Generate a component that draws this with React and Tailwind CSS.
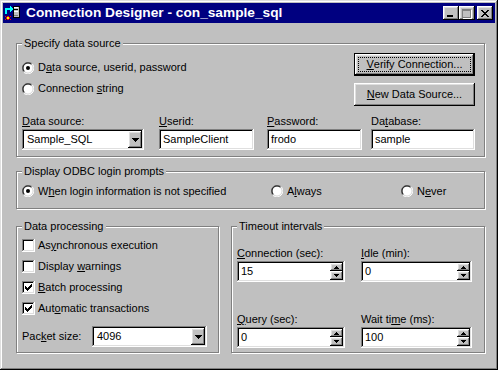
import React from 'react';

const raised = 'shadow-[inset_-1px_-1px_#000,inset_1px_1px_#fff,inset_-2px_-2px_#808080,inset_2px_2px_#dfdfdf]';
const sunken = 'shadow-[inset_-1px_-1px_#fff,inset_1px_1px_#808080,inset_-2px_-2px_#dfdfdf,inset_2px_2px_#000]';

// underlined access key
const K = ({ children }) => <span className="underline underline-offset-[1px]">{children}</span>;

const Group = ({ label, className, children }) => (
  <div className={`relative border border-[#808080] shadow-[1px_1px_0_#fff,inset_1px_1px_0_#fff] ${className}`}>
    <span className="absolute left-[5px] -top-[8px] bg-[#c0c0c0] px-[2px] leading-[14px]">{label}</span>
    {children}
  </div>
);

const Radio = ({ checked }) => (
  <svg width="12" height="12" viewBox="0 0 12 12" className="shrink-0">
    <circle cx="6" cy="6" r="5" fill="#fff" />
    <path d="M1.76 10.24A6 6 0 0 1 10.24 1.76" stroke="#808080" fill="none" />
    <path d="M10.24 1.76A6 6 0 0 1 1.76 10.24" stroke="#fff" fill="none" />
    <path d="M2.46 9.54A5 5 0 0 1 9.54 2.46" stroke="#000" fill="none" />
    <path d="M9.54 2.46A5 5 0 0 1 2.46 9.54" stroke="#dfdfdf" fill="none" />
    {checked && <circle cx="6" cy="6" r="2" fill="#000" />}
  </svg>
);

const Check = ({ checked }) => (
  <div className={`w-[13px] h-[13px] shrink-0 bg-white ${sunken} flex items-center justify-center`}>
    {checked && (
      <svg width="7" height="7" viewBox="0 0 7 7" shapeRendering="crispEdges">
        <path d="M0 2h1v3h-1zM1 3h1v3h-1zM2 4h1v3h-1zM3 3h1v3h-1zM4 2h1v3h-1zM5 1h1v3h-1zM6 0h1v3h-1z" fill="#000" />
      </svg>
    )}
  </div>
);

const Arrow = ({ up }) => (
  <svg width="7" height="4" viewBox="0 0 7 4" shapeRendering="crispEdges" className={up ? 'rotate-180' : ''}>
    <path d="M0 0h7v1h-7zM1 1h5v1h-5zM2 2h3v1h-3zM3 3h1v1h-1z" fill="#000" />
  </svg>
);

const Combo = ({ value, className }) => (
  <div className={`flex h-[21px] bg-white p-[2px] ${sunken} ${className}`}>
    <span className="flex-1 pl-[3px] leading-[17px]">{value}</span>
    <div className={`w-[14px] bg-[#c0c0c0] ${raised} flex items-center justify-center`}>
      <Arrow />
    </div>
  </div>
);

const Field = ({ value, className }) => (
  <div className={`h-[21px] bg-white p-[2px] ${sunken} ${className}`}>
    <span className="block pl-[2px] leading-[17px]">{value}</span>
  </div>
);

const SmallArrow = ({ up }) => (
  <svg width="5" height="3" viewBox="0 0 5 3" shapeRendering="crispEdges" className={up ? 'rotate-180' : ''}>
    <path d="M0 0h5v1h-5zM1 1h3v1h-3zM2 2h1v1h-1z" fill="#000" />
  </svg>
);

const Spin = ({ value, className }) => (
  <div className={`flex h-[21px] bg-white p-[2px] ${sunken} ${className}`}>
    <span className="flex-1 pl-[2px] leading-[17px]">{value}</span>
    <div className="flex flex-col w-[13px]">
      <div className={`h-[8px] bg-[#c0c0c0] ${raised} flex items-center justify-center`}>
        <SmallArrow up />
      </div>
      <div className={`h-[9px] bg-[#c0c0c0] ${raised} flex items-center justify-center`}>
        <SmallArrow />
      </div>
    </div>
  </div>
);

const Button = ({ children, isDefault }) => (
  <div className={`w-[121px] h-[23px] ${isDefault ? 'border border-black' : ''}`}>
    <div className={`w-full h-full bg-[#c0c0c0] ${raised} flex items-center justify-center ${isDefault ? 'p-[3px]' : ''}`}>
      {isDefault ? (
        <div className="w-full h-full border border-dotted border-black flex items-center justify-center leading-[13px]">
          {children}
        </div>
      ) : (
        <span className="leading-[13px]">{children}</span>
      )}
    </div>
  </div>
);

const TitleIcon = () => (
  <svg width="16" height="16" viewBox="0 0 16 16" shapeRendering="crispEdges">
    {/* server box */}
    <rect x="9" y="1" width="6" height="11" fill="#c0c0c0" stroke="#000" strokeWidth="1" />
    <rect x="10" y="2" width="4" height="1" fill="#fff" />
    <rect x="10" y="4" width="4" height="1" fill="#000" />
    <rect x="10" y="6" width="4" height="1" fill="#fff" />
    <rect x="10" y="10" width="4" height="1" fill="#808080" />
    {/* cyan arrow */}
    <path d="M2 9V4h5" stroke="#00ffff" strokeWidth="2" fill="none" />
    <path d="M6 1l3 3-3 3z" fill="#00ffff" />
    {/* spark */}
    <path d="M1 11l2 1 1-2 1 2 2-1-1 2 1 2-2-1-1 2-1-2-2 1 1-2z" fill="#ff0000" />
    <rect x="3" y="12" width="2" height="2" fill="#ffff00" />
  </svg>
);

const TitleButton = ({ children }) => (
  <div className={`w-[16px] h-[14px] bg-[#c0c0c0] ${raised} flex items-center justify-center`}>
    {children}
  </div>
);

export default function App() {
  return (
    <div className="w-[498px] h-[370px] bg-[#c0c0c0] p-[3px] text-[11px] text-black font-['Liberation_Sans',Arial,sans-serif] shadow-[inset_-1px_-1px_#000,inset_1px_1px_#dfdfdf,inset_-2px_-2px_#808080,inset_2px_2px_#fff] overflow-hidden">
      {/* Title bar */}
      <div className="h-[20px] bg-[#000080] flex items-center pl-[1px] pr-[2px]">
        <TitleIcon />
        <span className="ml-[6px] text-white font-bold text-[13.7px] leading-none">Connection Designer - con_sample_sql</span>
        <div className="ml-auto flex items-center">
          <TitleButton>
            <div className="w-[6px] h-[2px] bg-black mt-[6px] -ml-[2px]" />
          </TitleButton>
          <TitleButton>
            <div className="w-[9px] h-[9px] border border-[#808080] border-t-2 shadow-[1px_1px_0_#fff] -ml-[1px]" />
          </TitleButton>
          <div className="ml-[2px]">
            <TitleButton>
              <svg width="8" height="7" viewBox="0 0 8 7" shapeRendering="crispEdges" className="-ml-[1px]">
                <path d="M0 0h2v1h-2zM6 0h2v1h-2zM1 1h2v1h-2zM5 1h2v1h-2zM2 2h4v1h-4zM3 3h2v1h-2zM2 4h4v1h-4zM1 5h2v1h-2zM5 5h2v1h-2zM0 6h2v1h-2zM6 6h2v1h-2z" fill="#000" />
              </svg>
            </TitleButton>
          </div>
        </div>
      </div>

      <div className="pl-[13px] pt-[20px]">
        {/* Specify data source */}
        <Group label="Specify data source" className="w-[469px] h-[114px] pt-[9px] pl-[5px] pr-[9px]">
          <div className="flex items-start h-[53px]">
            <div className="flex flex-col mt-[4px]">
              <div className="flex items-center gap-[4px] h-[21px]">
                <Radio checked />
                <span>D<K>a</K>ta source, userid, password</span>
              </div>
              <div className="flex items-center gap-[4px] h-[21px]">
                <Radio />
                <span>Connection <K>s</K>tring</span>
              </div>
            </div>
            <div className="ml-auto flex flex-col gap-[7px]">
              <Button isDefault><K>V</K>erify Connection...</Button>
              <Button><K>N</K>ew Data Source...</Button>
            </div>
          </div>
          <div className="flex mt-[8px]">
            <div className="flex flex-col w-[122px]">
              <span className="leading-[14px]"><K>D</K>ata source:</span>
              <Combo value="Sample_SQL" className="mt-[1px]" />
            </div>
            <div className="flex flex-col w-[95px] ml-[15px]">
              <span className="leading-[14px]"><K>U</K>serid:</span>
              <Field value="SampleClient" className="mt-[1px]" />
            </div>
            <div className="flex flex-col w-[95px] ml-[13px]">
              <span className="leading-[14px]"><K>P</K>assword:</span>
              <Field value="frodo" className="mt-[1px]" />
            </div>
            <div className="flex flex-col w-[104px] ml-[9px]">
              <span className="leading-[14px]">Da<K>t</K>abase:</span>
              <Field value="sample" className="mt-[1px]" />
            </div>
          </div>
        </Group>

        {/* Display ODBC login prompts */}
        <Group label="Display ODBC login prompts" className="w-[469px] h-[38px] mt-[14px] pt-[12px] pl-[5px]">
          <div className="flex items-center h-[14px]">
            <div className="flex items-center gap-[4px] w-[249px]">
              <Radio checked />
              <span>W<K>h</K>en login information is not specified</span>
            </div>
            <div className="flex items-center gap-[4px] w-[130px]">
              <Radio />
              <span>A<K>l</K>ways</span>
            </div>
            <div className="flex items-center gap-[4px]">
              <Radio />
              <span>N<K>e</K>ver</span>
            </div>
          </div>
        </Group>

        <div className="flex gap-[12px] mt-[17px]">
          {/* Data processing */}
          <Group label="Data processing" className="w-[203px] h-[127px] pt-[8px] pl-[5px]">
            <div className="flex items-center gap-[3px] h-[21px]">
              <Check />
              <span>As<K>y</K>nchronous execution</span>
            </div>
            <div className="flex items-center gap-[3px] h-[21px]">
              <Check />
              <span>Display <K>w</K>arnings</span>
            </div>
            <div className="flex items-center gap-[3px] h-[21px]">
              <Check checked />
              <span><K>B</K>atch processing</span>
            </div>
            <div className="flex items-center gap-[3px] h-[21px]">
              <Check checked />
              <span>Aut<K>o</K>matic transactions</span>
            </div>
            <div className="flex items-center mt-[7px]">
              <span className="w-[70px]">Pac<K>k</K>et size:</span>
              <Combo value="4096" className="w-[115px]" />
            </div>
          </Group>

          {/* Timeout intervals */}
          <Group label="Timeout intervals" className="w-[254px] h-[127px] pt-[19px] pl-[5px]">
            <div className="flex">
              <div className="flex flex-col w-[108px]">
                <span className="leading-[14px]"><K>C</K>onnection (sec):</span>
                <Spin value="15" className="mt-[1px]" />
              </div>
              <div className="flex flex-col w-[111px] ml-[16px]">
                <span className="leading-[14px]"><K>I</K>dle (min):</span>
                <Spin value="0" className="mt-[1px]" />
              </div>
            </div>
            <div className="flex mt-[30px]">
              <div className="flex flex-col w-[108px]">
                <span className="leading-[14px]"><K>Q</K>uery (sec):</span>
                <Spin value="0" className="mt-[1px]" />
              </div>
              <div className="flex flex-col w-[111px] ml-[16px]">
                <span className="leading-[14px]">Wait ti<K>m</K>e (ms):</span>
                <Spin value="100" className="mt-[1px]" />
              </div>
            </div>
          </Group>
        </div>
      </div>
    </div>
  );
}
